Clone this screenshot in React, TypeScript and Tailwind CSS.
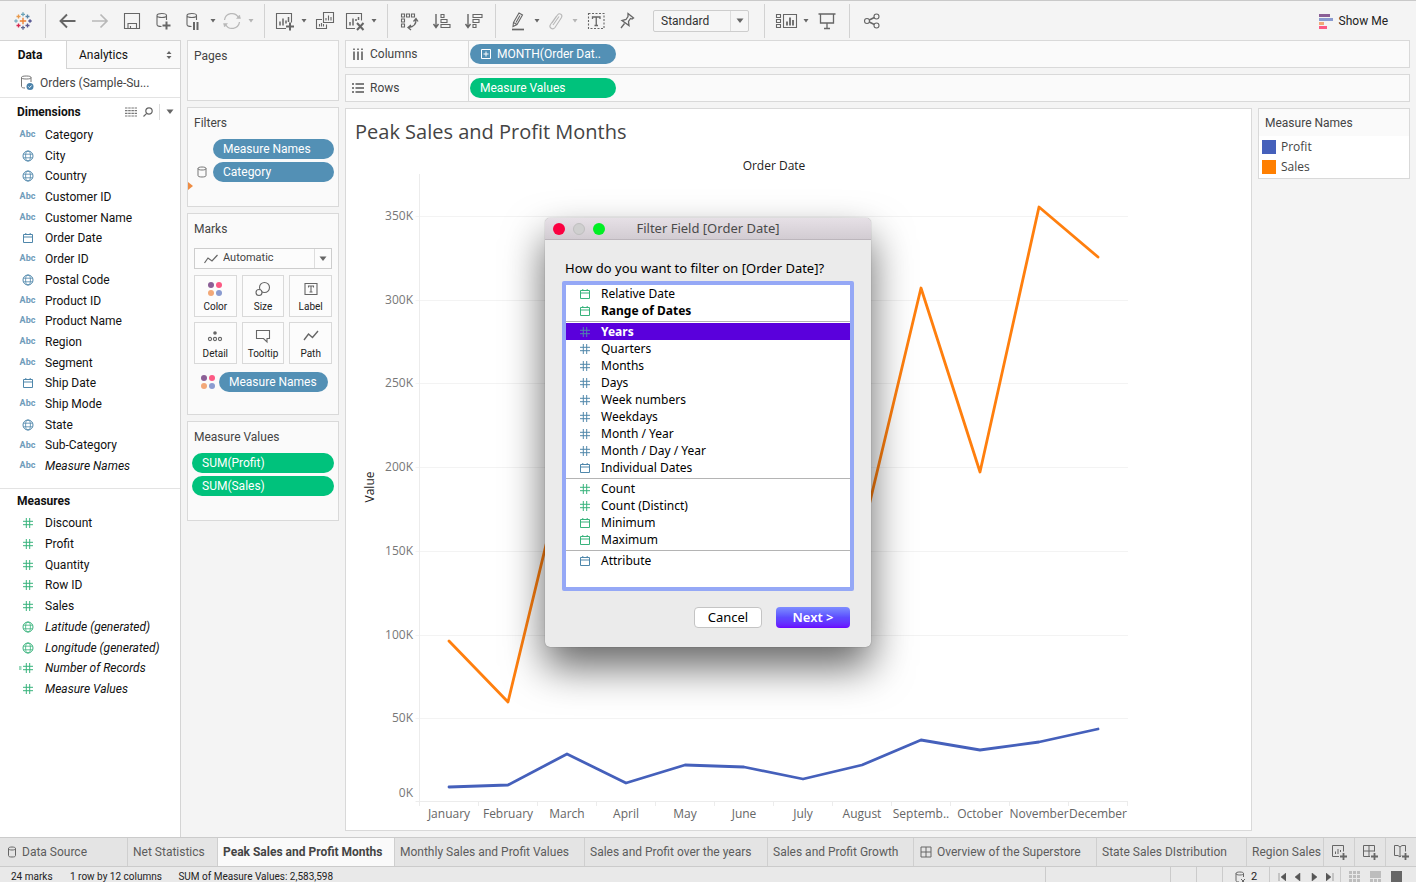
import type { ReactNode } from 'react';

type IconKind = 'abc' | 'globe' | 'date' | 'num' | 'calc';
type Tone = 'blue' | 'green';

const dimensions: [IconKind, string][] = [
  ['abc', 'Category'],
  ['globe', 'City'],
  ['globe', 'Country'],
  ['abc', 'Customer ID'],
  ['abc', 'Customer Name'],
  ['date', 'Order Date'],
  ['abc', 'Order ID'],
  ['globe', 'Postal Code'],
  ['abc', 'Product ID'],
  ['abc', 'Product Name'],
  ['abc', 'Region'],
  ['abc', 'Segment'],
  ['date', 'Ship Date'],
  ['abc', 'Ship Mode'],
  ['globe', 'State'],
  ['abc', 'Sub-Category'],
  ['abc', 'Measure Names'],
];

const measures: [IconKind, string][] = [
  ['num', 'Discount'],
  ['num', 'Profit'],
  ['num', 'Quantity'],
  ['num', 'Row ID'],
  ['num', 'Sales'],
  ['globe', 'Latitude (generated)'],
  ['globe', 'Longitude (generated)'],
  ['calc', 'Number of Records'],
  ['num', 'Measure Values'],
];

const generated = ['Measure Names', 'Latitude (generated)', 'Longitude (generated)', 'Number of Records', 'Measure Values'];

const filterOptions: [IconKind, Tone, string][][] = [
  [
    ['date', 'green', 'Relative Date'],
    ['date', 'green', 'Range of Dates'],
  ],
  [
    ['num', 'blue', 'Years'],
    ['num', 'blue', 'Quarters'],
    ['num', 'blue', 'Months'],
    ['num', 'blue', 'Days'],
    ['num', 'blue', 'Week numbers'],
    ['num', 'blue', 'Weekdays'],
    ['num', 'blue', 'Month / Year'],
    ['num', 'blue', 'Month / Day / Year'],
    ['date', 'blue', 'Individual Dates'],
  ],
  [
    ['num', 'green', 'Count'],
    ['num', 'green', 'Count (Distinct)'],
    ['date', 'green', 'Minimum'],
    ['date', 'green', 'Maximum'],
  ],
  [['date', 'blue', 'Attribute']],
];

const months = ['January', 'February', 'March', 'April', 'May', 'June', 'July', 'August', 'Septemb..', 'October', 'November', 'December'];
const salesY = [490, 551, 307, 318, 390, 398, 405, 384, 137, 321, 56, 106];
const profitY = [636, 634, 603, 632, 614, 616, 628, 614, 589, 599, 591, 578];
const axisLabels = ['350K', '300K', '250K', '200K', '150K', '100K', '50K', '0K'];

function FieldIcon({ kind, tone }: { kind: IconKind; tone: Tone }) {
  const color = tone === 'blue' ? 'text-[#4f87ab]' : 'text-[#38b37c]';
  if (kind === 'abc') {
    return <span className="text-[9px] font-bold text-[#6f9cba]">Abc</span>;
  }
  return (
    <svg className={`size-3 shrink-0 overflow-visible ${color}`} viewBox="0 0 12 12" fill="none" stroke="currentColor">
      {kind === 'globe' && (
        <>
          <circle cx="6" cy="6" r="5" />
          <ellipse cx="6" cy="6" rx="2.4" ry="5" strokeWidth=".8" />
          <path d="M1.5 4.2h9M1.5 7.8h9" strokeWidth=".8" />
        </>
      )}
      {kind === 'date' && <path d="M1.5 2.5h9v8h-9zM1.5 5h9M3.8 1v1.5M8.2 1v1.5" />}
      {(kind === 'num' || kind === 'calc') && <path d="M4.3 1v10M7.7 1v10M1 4.3h10M1 7.7h10" />}
      {kind === 'calc' && <path d="M-3 5h2.5M-3 7h2.5" />}
    </svg>
  );
}

function Field({ kind, name, tone }: { kind: IconKind; name: string; tone: Tone }) {
  return (
    <li className="flex h-5 items-center">
      <span className="flex w-[45px] justify-center pl-2.5">
        <FieldIcon kind={kind} tone={tone} />
      </span>
      <span className={generated.includes(name) ? 'italic' : ''}>{name}</span>
    </li>
  );
}

function Caret({ faded }: { faded?: boolean }) {
  return (
    <button aria-label="More" className={`flex w-2.5 justify-center ${faded ? 'text-[#b5b5b5]' : 'text-[#666]'}`}>
      <svg className="h-1 w-1.5" viewBox="0 0 6 4" fill="currentColor">
        <path d="M.5 0h5L3 3.5z" />
      </svg>
    </button>
  );
}

function DropArrow() {
  return (
    <svg className="h-1.5 w-2" viewBox="0 0 8 6" fill="#666">
      <path d="M.5.5h7L4 5z" />
    </svg>
  );
}

function Tool({ label, wide, faded, children }: { label: string; wide?: boolean; faded?: boolean; children: ReactNode }) {
  return (
    <button
      aria-label={label}
      className={`flex shrink-0 justify-center ${wide ? 'w-8' : 'w-7'} ${faded ? 'text-[#b8b8b8]' : 'text-[#666]'}`}
    >
      <svg className="size-5 overflow-visible" viewBox="0 0 20 20" fill="none" stroke="currentColor" strokeWidth="1.1">
        {children}
      </svg>
    </button>
  );
}

function Divider() {
  return <div className="h-[34px] w-px shrink-0 bg-[#d2d2d2]" />;
}

const cylinder = 'M3 4.5v9c0 1.2 1.8 2 4.5 2M12.5 4.5V9M3 4.5C3 3.2 5 2.5 7.8 2.5s4.7.7 4.7 2-2 2-4.7 2S3 5.8 3 4.5';

function Logo() {
  const crosses: [number, number, number, string][] = [
    [10, 10, 3.2, '#eb7d31'],
    [10, 3.3, 2, '#6ba3b8'],
    [10, 16.7, 2, '#5b6591'],
    [3, 10, 1.7, '#7bb0c4'],
    [17, 10, 1.7, '#4f4f8f'],
    [5.5, 5.5, 2, '#e89a4c'],
    [14.5, 5.5, 2, '#5a86a8'],
    [5.5, 14.5, 2, '#d8274f'],
    [14.5, 14.5, 2, '#5a5791'],
  ];
  return (
    <svg className="size-5" viewBox="0 0 20 20" fill="none">
      {crosses.map(([x, y, r, color]) => (
        <path key={`${x}-${y}`} d={`M${x - r} ${y}h${r * 2}M${x} ${y - r}v${r * 2}`} stroke={color} strokeWidth="1.3" />
      ))}
    </svg>
  );
}

function Toolbar() {
  return (
    <header className="flex h-10 shrink-0 items-center border-t border-[#c9c9c9]">
      <div className="flex w-[45px] justify-center">
        <Logo />
      </div>
      <Divider />
      <div className="flex items-center pr-2 pl-1.5">
        <Tool label="Undo" wide>
          <path d="M17.5 10H3M9 3.5L2.5 10 9 16.5" strokeWidth="1.9" />
        </Tool>
        <Tool label="Redo" wide faded>
          <path d="M2 10h14.5M10.5 3.5L17 10l-6.5 6.5" strokeWidth="1.7" />
        </Tool>
        <Tool label="Save" wide>
          <path d="M2.5 2.5h15v15h-15zM6 17.5v-5h8.5v5M8.500 17.5v-2.5" />
        </Tool>
        <Tool label="New data source" wide>
          <path d={cylinder} />
          <path d="M12.5 10.5v8M8.5 14.5h8" strokeWidth="2" />
        </Tool>
        <Tool label="Pause updates">
          <path d={cylinder} />
          <path d="M10 11v8M13.5 11v8" strokeWidth="2" />
        </Tool>
        <Caret />
        <Tool label="Refresh" faded>
          <path d="M2.5 9a7.5 7.5 0 0 1 14-2.5M17.5 11a7.5 7.5 0 0 1-14 2.5" strokeWidth="1.3" />
          <path d="M14.5 7.500h4l-1-3.5zM5.5 12.5h-4l1 3.5z" fill="currentColor" strokeWidth=".5" />
        </Tool>
        <Caret faded />
      </div>
      <Divider />
      <div className="flex items-center pr-2 pl-1.5">
        <Tool label="New worksheet">
          <path d="M11 17.5H1.500v-15h15v9" />
          <path d="M5 14.5v-4M8 14.5v-7M11 12.5v-3M13.5 11v-5" strokeWidth="1.5" />
          <path d="M15 11.5v8M11 15.5h8" strokeWidth="2" />
        </Tool>
        <Caret />
        <Tool label="Duplicate sheet" wide>
          <path d="M8.5 1.500h10v10h-10zM7 8.500H1.500v9h10v-4" />
          <path d="M11 9.500V7M13.5 9.500V4.500M16 9.500V6M4.500 15.500V13M6.500 15.500V12M8.500 15.500V13" />
        </Tool>
        <Tool label="Clear sheet">
          <path d="M10 17.5H1.500v-15h15v7" />
          <path d="M5 14.5V11M8 14.5v-7M11 10V8M13.5 9V6" strokeWidth="1.5" />
          <path d="M12 12l6.500 7M18.500 12L12 19" strokeWidth="2" />
        </Tool>
        <Caret />
      </div>
      <Divider />
      <div className="flex items-center pr-[5px] pl-1.5">
        <Tool label="Swap rows and columns" wide>
          <path d="M1.500 3h3v3h-3zM6.500 3h3v3h-3zM11.5 3h3v3h-3zM1.500 8h3v3h-3zM1.500 13h3v3h-3z" />
          <path d="M16 8c.3 5-2 8-7.500 8.500M13.5 10.500l2.500-3 2 3M11 14l-3 2.500 3 2.500" strokeWidth="1.3" />
        </Tool>
        <Tool label="Sort ascending" wide>
          <path d="M4 3v13M1.500 13L4 16.500 6.500 13" strokeWidth="1.400" />
          <path d="M9 3.500h3v3H9zM9 8.500h6v3H9zM9 13.500h9v3H9z" />
        </Tool>
        <Tool label="Sort descending" wide>
          <path d="M4 3v13M1.500 13L4 16.500 6.500 13" strokeWidth="1.400" />
          <path d="M9 3.500h9v3H9zM9 8.500h6v3H9zM9 13.500h3v3H9z" />
        </Tool>
      </div>
      <Divider />
      <div className="flex items-center pr-[15px] pl-2">
        <Tool label="Highlight">
          <path d="M5.500 11.500L11 2l3.500 2L9 13.500l-4 2zM5.500 11.500l3.500 2M12 4.500l-4 7" />
          <path d="M4 18.500h12" strokeWidth="1.700" />
        </Tool>
        <Caret />
        <Tool label="Group members" faded>
          <path d="M6 12l5.500-8c2-2.500 5.500-.5 4 2.500L9 16.500c-2.500 3-6.500 0-4.500-3l6-8.500M7 14l6-8.500" />
        </Tool>
        <Caret faded />
        <Tool label="Show mark labels" wide>
          <path d="M2.500 2.500H18v15H2.500z" strokeDasharray="2 1.500" />
          <path d="M6.500 8V6H14v2M10.250 6v8.500M8.500 14.500H12" strokeWidth="1.300" />
        </Tool>
        <Tool label="Fix axes">
          <path d="M12 2.500l5.500 4.500-1.500 1-1.500-.5-2 3 .5 4-7-5 4-1 2-3zM8.500 12.500L5 17" strokeWidth="1.300" />
        </Tool>
        <div className="relative ml-[13px] h-[22px] w-24">
          <select
            aria-label="Fit"
            className="block h-full w-full appearance-none rounded-xs border border-[#cdcdcd] bg-[#f6f6f6] pl-[7px] text-[12px] text-[#333]"
          >
            <option>Standard</option>
          </select>
          <span className="pointer-events-none absolute inset-y-px right-px flex w-[18px] items-center justify-center border-l border-[#ddd]">
            <DropArrow />
          </span>
        </div>
      </div>
      <Divider />
      <div className="flex items-center pr-1.5 pl-2">
        <Tool label="Show cards">
          <path d="M6.500 3.500h13v13h-13zM-.5 3.500h4v3h-4zM-.5 8.500h4v3h-4zM-.5 13.500h4v3h-4z" />
          <path d="M10 14.500v-4M13 14.500v-8M16 14.500V9" strokeWidth="1.800" />
        </Tool>
        <Caret />
        <Tool label="Presentation mode" wide>
          <path d="M1.500 3h17M3.500 3v9h13V3M10 12v5M7 17.500h6" strokeWidth="1.300" />
        </Tool>
      </div>
      <Divider />
      <div className="flex grow items-center pl-2">
        <Tool label="Share">
          <circle cx="5" cy="10" r="2.500" />
          <circle cx="14.500" cy="5.500" r="2.500" />
          <circle cx="14.500" cy="14.500" r="2.500" />
          <path d="M7.300 9l5-2.500M7.300 11l5 2.500" strokeWidth="1.400" />
        </Tool>
      </div>
      <button className="mr-7 flex items-center gap-1.5 text-[12px] text-[#222]">
        <svg className="h-4 w-3.5" viewBox="0 0 14 16">
          <path fill="#8b5f96" d="M0 1h11v3H0z" />
          <path fill="#8a9bd0" d="M0 5h14v3H0z" />
          <path fill="#f2a878" d="M0 9h5v3H0z" />
          <path fill="#fc5a84" d="M0 13h8v3H0z" />
        </svg>
        Show Me
      </button>
    </header>
  );
}

function Sidebar() {
  return (
    <aside className="flex w-[181px] shrink-0 flex-col border-t border-r border-[#d4d4d4] bg-white text-[12px] text-[#111]">
      <div className="flex h-7 shrink-0">
        <button className="w-[66px] pr-1.5 font-bold">Data</button>
        <button className="flex grow items-center justify-between border-b border-l border-[#d4d4d4] bg-[#f9f9f9] pr-2 pl-3">
          Analytics
          <svg className="h-2 w-1.5" viewBox="0 0 6 8" fill="#666">
            <path d="M3 0l2.500 3h-5zM3 8L.5 5h5z" />
          </svg>
        </button>
      </div>
      <div className="flex h-[29px] shrink-0 items-center border-b border-[#e3e3e3] pl-5 text-[#444]">
        <svg className="mr-1.5 size-3.5 overflow-visible" viewBox="0 0 14 14" fill="none" stroke="#777">
          <path d="M1.500 1.500v9c0 1 1.500 1.500 3.500 1.500M11 1.500V6M1.500 1.500C1.500.5 3 0 6.200 0S11 .5 11 1.500 9.500 3 6.200 3 1.500 2.500 1.500 1.500" />
          <circle cx="10" cy="10.500" r="3.500" fill="#4a82aa" stroke="none" />
          <path d="M8.400 10.500l1.200 1.200 2-2.200" stroke="#fff" />
        </svg>
        Orders (Sample-Su...
      </div>
      <div className="flex h-[27px] shrink-0 items-center pr-1.5 pl-[17px]">
        <h2 className="grow font-bold">Dimensions</h2>
        <button aria-label="View as list" className="mr-1.5">
          <svg className="h-2.5 w-3" viewBox="0 0 12 10" stroke="#777" strokeWidth="1.200">
            <path d="M0 1h12M0 3.600h12M0 6.300h12M0 9h12" strokeDasharray="2.500 .7" />
          </svg>
        </button>
        <button aria-label="Find field" className="mr-1.5">
          <svg className="size-2.5" viewBox="0 0 10 10" fill="none" stroke="#666" strokeWidth="1.200">
            <circle cx="6" cy="4" r="3.200" />
            <path d="M3.700 6.300L.5 9.500" />
          </svg>
        </button>
        <div className="mr-1.5 h-4 w-px bg-[#ddd]" />
        <button aria-label="Dimensions menu">
          <DropArrow />
        </button>
      </div>
      <ul className="flex h-[351px] shrink-0 flex-col justify-between">
        {dimensions.map(([kind, name]) => (
          <Field key={name} kind={kind} name={name} tone="blue" />
        ))}
      </ul>
      <h2 className="mt-3 flex h-[25px] shrink-0 items-center border-t border-[#e3e3e3] pl-[17px] font-bold">Measures</h2>
      <ul className="flex h-[186px] shrink-0 flex-col justify-between">
        {measures.map(([kind, name]) => (
          <Field key={name} kind={kind} name={name} tone="green" />
        ))}
      </ul>
    </aside>
  );
}

function Pill({ tone, className, children }: { tone: Tone; className?: string; children: ReactNode }) {
  return (
    <button
      className={`flex h-5 items-center rounded-full px-2.5 text-[12px] text-white ${tone === 'blue' ? 'bg-[#5390b5]' : 'bg-[#00c27c]'} ${className ?? ''}`}
    >
      {children}
    </button>
  );
}

function Card({ title, className, children }: { title: string; className: string; children?: ReactNode }) {
  return (
    <section className={`relative shrink-0 border border-[#d9d9d9] bg-[#fafafa] ${className}`}>
      <h3 className="flex h-[30px] items-center pl-1.5 text-[12px] text-[#444]">{title}</h3>
      {children}
    </section>
  );
}

function ColorDots() {
  return (
    <svg className="size-4" viewBox="0 0 16 16">
      <circle cx="4" cy="4" r="3" fill="#8b5f96" />
      <circle cx="12" cy="4" r="3" fill="#fc5a84" />
      <circle cx="4" cy="12" r="3" fill="#f2a878" />
      <circle cx="12" cy="12" r="3" fill="#8a9bd0" />
    </svg>
  );
}

function MarkButton({ label, children }: { label: string; children: ReactNode }) {
  return (
    <button className="flex h-[42px] flex-col items-center justify-between border border-[#d9d9d9] bg-[#fcfcfc] pt-[5px] pb-0.5 text-[10px] text-[#222]">
      {children}
      {label}
    </button>
  );
}

function MarkIcon({ children }: { children: ReactNode }) {
  return (
    <svg className="size-4" viewBox="0 0 16 16" fill="none" stroke="#666" strokeWidth="1.100">
      {children}
    </svg>
  );
}

function Cards() {
  return (
    <div className="flex w-[152px] shrink-0 flex-col gap-1.5">
      <Card title="Pages" className="h-[61px]" />
      <Card title="Filters" className="h-[100px]">
        <div className="flex flex-col items-end gap-[3px] pt-px pr-1">
          <Pill tone="blue" className="w-[121px]">Measure Names</Pill>
          <div className="flex items-center gap-1.5">
            <svg className="h-3 w-2.5" viewBox="0 0 10 12" fill="none" stroke="#777">
              <path d="M1 2.500v7c0 1 1.500 1.500 4 1.500s4-.5 4-1.500v-7M1 2.500C1 1.500 2.500 1 5 1s4 .5 4 1.500S7.500 4 5 4 1 3.500 1 2.500" />
            </svg>
            <Pill tone="blue" className="w-[121px]">Category</Pill>
          </div>
        </div>
        <svg className="absolute bottom-4 left-0 h-2 w-[5px]" viewBox="0 0 5 8" fill="#ee8c43">
          <path d="M0 0l5 4-5 4z" />
        </svg>
      </Card>
      <Card title="Marks" className="h-[202px]">
        <div className="relative mx-1.5 mt-1 h-[21px]">
          <select
            aria-label="Mark type"
            className="block h-full w-full appearance-none border border-[#cdcdcd] bg-[#fcfcfc] pl-7 text-[11px] text-[#444]"
          >
            <option>Automatic</option>
          </select>
          <svg className="pointer-events-none absolute top-1.5 left-2.5 h-2.5 w-3.5" viewBox="0 0 14 10" fill="none" stroke="#666" strokeWidth="1.200">
            <path d="M.5 9L4 4l4 3 5.500-6" />
          </svg>
          <span className="pointer-events-none absolute inset-y-px right-px flex w-[17px] items-center justify-center border-l border-[#ddd]">
            <DropArrow />
          </span>
        </div>
        <div className="mx-1.5 mt-1.5 grid grid-cols-3 gap-[5px]">
          <MarkButton label="Color">
            <ColorDots />
          </MarkButton>
          <MarkButton label="Size">
            <MarkIcon>
              <circle cx="9.500" cy="6.500" r="5" />
              <circle cx="4" cy="11.500" r="3" fill="#fcfcfc" />
            </MarkIcon>
          </MarkButton>
          <MarkButton label="Label">
            <MarkIcon>
              <path d="M2 2.500h12v11H2z" />
              <path d="M5.500 6.500V5h5v1.500M8 5v6M6.500 11h3" />
            </MarkIcon>
          </MarkButton>
          <MarkButton label="Detail">
            <MarkIcon>
              <circle cx="8" cy="5" r="1.800" fill="#666" stroke="none" />
              <circle cx="3" cy="11" r="1.600" />
              <circle cx="8" cy="11" r="1.600" />
              <circle cx="13" cy="11" r="1.600" />
            </MarkIcon>
          </MarkButton>
          <MarkButton label="Tooltip">
            <MarkIcon>
              <path d="M1.500 2.500h13v8H12V14l-3.500-3.500h-7z" />
            </MarkIcon>
          </MarkButton>
          <MarkButton label="Path">
            <MarkIcon>
              <path d="M1 12l4.500-6 4 3.500L15 3" strokeWidth="1.400" />
            </MarkIcon>
          </MarkButton>
        </div>
        <div className="mt-2 flex items-center gap-[3px] pl-3">
          <ColorDots />
          <Pill tone="blue" className="w-[109px]">Measure Names</Pill>
        </div>
      </Card>
      <Card title="Measure Values" className="h-[100px]">
        <div className="flex flex-col gap-[3px] px-1 pt-px">
          <Pill tone="green">SUM(Profit)</Pill>
          <Pill tone="green">SUM(Sales)</Pill>
        </div>
      </Card>
    </div>
  );
}

function Shelf({ label, icon, children }: { label: string; icon: ReactNode; children: ReactNode }) {
  return (
    <div className="flex h-7 shrink-0 items-center border border-[#d9d9d9] bg-[#fafafa] text-[12px] text-[#444]">
      <div className="flex h-full w-[123px] items-center gap-1.5 border-r border-[#d9d9d9] pl-1.5">
        <svg className="size-3" viewBox="0 0 12 12" stroke="#555" strokeWidth="1.500">
          {icon}
        </svg>
        {label}
      </div>
      <div className="pl-px">{children}</div>
    </div>
  );
}

const MONTH_STEP = 59;
const FIRST_MONTH = 103;
const AXIS_X = 73.5;

function linePoints(values: number[]) {
  return values.map((y, i) => `${FIRST_MONTH + i * MONTH_STEP},${y}`).join(' ');
}

function Chart() {
  return (
    <svg
      className="min-h-0 w-full grow"
      viewBox="0 0 905 678"
      preserveAspectRatio="xMinYMin meet"
      fontFamily="'Open Sans', 'Noto Sans', sans-serif"
      fontSize="12"
    >
      <text x="428" y="19" textAnchor="middle" fill="#222">
        Order Date
      </text>
      {axisLabels.map((label, i) => {
        const y = i === 7 ? 642 : 65 + Math.round(i * 83.7);
        return (
          <g key={label}>
            {i < 7 && <path d={`M${AXIS_X - 4} ${y + 0.5}H782`} stroke="#f3f3f3" />}
            <text x="67" y={y + 4} textAnchor="end" fill="#777">
              {label}
            </text>
          </g>
        );
      })}
      <path d={`M${AXIS_X} 23v632M${AXIS_X - 4} 650.5H782`} stroke="#ececec" fill="none" />
      {months.map((month, i) => (
        <path key={month} d={`M${AXIS_X + (i + 1) * MONTH_STEP} 650v5`} stroke="#ececec" />
      ))}
      <text transform="translate(28 336) rotate(-90)" textAnchor="middle" fill="#222">
        Value
      </text>
      <polyline points={linePoints(salesY)} fill="none" stroke="#ff7f0e" strokeWidth="2.800" strokeLinejoin="round" strokeLinecap="round" />
      <polyline points={linePoints(profitY)} fill="none" stroke="#4560bb" strokeWidth="2.800" strokeLinejoin="round" strokeLinecap="round" />
      {months.map((month, i) => (
        <text key={month} x={FIRST_MONTH + i * MONTH_STEP} y="667" textAnchor="middle" fill="#666">
          {month}
        </text>
      ))}
    </svg>
  );
}

function Workspace() {
  return (
    <main className="flex min-w-0 grow flex-col gap-1.5">
      <Shelf label="Columns" icon={<path d="M2 .5v1.500M6 .5v1.500M10 .5v1.500M2 3.500V12M6 3.500V12M10 3.500V12" />}>
        <Pill tone="blue" className="w-[146px]">
          <svg className="mr-1.5 ml-px size-2.5 shrink-0" viewBox="0 0 10 10" fill="none" stroke="#fff">
            <path d="M.5.5h9v9h-9zM5 2.500v5M2.500 5h5" />
          </svg>
          MONTH(Order Dat..
        </Pill>
      </Shelf>
      <Shelf label="Rows" icon={<path d="M0 2h2M3.500 2H12M0 6h2M3.500 6H12M0 10h2M3.500 10H12" />}>
        <Pill tone="green" className="w-[146px]">Measure Values</Pill>
      </Shelf>
      <div className="flex min-h-0 grow items-start gap-1.5">
        <section className="flex h-full min-w-0 grow flex-col border border-[#d9d9d9] bg-white">
          <h1 className="flex h-[42px] shrink-0 items-end pb-1 pl-[9px] font-['Open_Sans','Noto_Sans',sans-serif] text-[20px] text-[#444]">
            Peak Sales and Profit Months
          </h1>
          <Chart />
        </section>
        <section className="w-[152px] shrink-0 border border-[#d9d9d9] bg-white">
          <h3 className="flex h-[27px] items-center bg-[#fafafa] pl-1.5 text-[12px] text-[#444]">Measure Names</h3>
          <ul className="py-px pl-[3px] font-['Open_Sans','Noto_Sans',sans-serif] text-[12px] text-[#444]">
            <li className="flex h-5 items-center gap-[5px]">
              <span className="size-3.5 bg-[#4560bb]" />
              Profit
            </li>
            <li className="flex h-5 items-center gap-[5px]">
              <span className="size-3.5 bg-[#ff7f00]" />
              Sales
            </li>
          </ul>
        </section>
      </div>
    </main>
  );
}

function FilterDialog() {
  return (
    <div
      role="dialog"
      aria-labelledby="filter-title"
      className="absolute top-[218px] left-1/2 w-[326px] -translate-x-1/2 rounded-[5px] bg-[#ebebeb] font-['Noto_Sans','Open_Sans',sans-serif] text-[13px] text-black shadow-[0_0_1px_rgba(0,0,0,0.5),0_20px_40px_rgba(0,0,0,0.6)]"
    >
      <div className="relative flex h-[22px] items-center justify-center rounded-t-[5px] border-b border-[#bcb6bc] bg-linear-to-b from-[#e6e0e6] to-[#d2ccd2]">
        <div className="absolute left-2 flex gap-2">
          <button aria-label="Close" className="size-3 rounded-full bg-[#fb0041]" />
          <button aria-label="Minimize" className="size-3 rounded-full border border-[#bfbfbf] bg-[#cfcfcf]" />
          <button aria-label="Zoom" className="size-3 rounded-full bg-[#00ef24]" />
        </div>
        <h2 id="filter-title" className="text-[#4a4a4a]">Filter Field [Order Date]</h2>
      </div>
      <div className="px-[17px] pt-[18px] pb-[19px]">
        <p className="h-[23px] pl-[3px] leading-5">How do you want to filter on [Order Date]?</p>
        <div role="listbox" aria-label="Filter type" className="h-[310px] rounded-xs border-4 border-[#95a8f6] bg-white text-[12px]">
          {filterOptions.map((group, g) => (
            <div key={group[0][2]} role="group">
              {g > 0 && <div className="mt-[2px] mb-px h-px bg-[#b4b4b4]" />}
              {group.map(([kind, tone, name]) => {
                const selected = name === 'Years';
                const bold = selected || name === 'Range of Dates';
                return (
                  <div
                    key={name}
                    role="option"
                    aria-selected={selected}
                    className={`flex h-[17px] items-center gap-2.5 pl-[13px] ${selected ? 'bg-[#5a00dc] text-white' : ''} ${bold ? 'font-bold' : ''}`}
                  >
                    <FieldIcon kind={kind} tone={tone} />
                    {name}
                  </div>
                );
              })}
            </div>
          ))}
        </div>
        <div className="mt-4 flex justify-end gap-[14px] pr-1">
          <button className="flex h-[21px] w-[68px] items-center justify-center rounded-[4px] border border-[#c4c4c4] bg-white">Cancel</button>
          <button className="flex h-[21px] w-[74px] items-center justify-center rounded-[4px] bg-linear-to-b from-[#7f8dff] via-[#5d4bff] to-[#6a00ff] font-semibold text-white">
            Next &gt;
          </button>
        </div>
      </div>
    </div>
  );
}

function SheetTab({ width, active, children }: { width: string; active?: boolean; children: ReactNode }) {
  return (
    <button
      className={`flex h-full items-center border-r border-[#cfcfcf] pl-[5px] whitespace-nowrap ${width} ${active ? 'bg-[#fafafa] font-bold text-[#444]' : ''}`}
    >
      {children}
    </button>
  );
}

function NewTab({ label, d }: { label: string; d: string }) {
  return (
    <button aria-label={label} className="flex h-full w-[31px] shrink-0 items-center justify-center border-l border-[#cfcfcf]">
      <svg className="size-4" viewBox="0 0 16 16" fill="none" stroke="#666">
        <path d={d} />
        <path d="M12.500 9v7M9 12.500h7" strokeWidth="1.800" />
      </svg>
    </button>
  );
}

function SheetTabs() {
  return (
    <nav className="flex h-[30px] shrink-0 items-center border-y border-[#cbcbcb] bg-[#e4e4e4] text-[12px] text-[#5c5c5c]">
      <div className="flex h-full min-w-0 grow">
        <SheetTab width="w-[128px] shrink-0">
          <svg className="mr-1.5 ml-[3px] h-3 w-2" viewBox="0 0 8 12" fill="none" stroke="#666">
            <path d="M.5 2.500v7c0 1 1 1.500 3.500 1.500s3.500-.5 3.500-1.500v-7C7.500 1.500 6 1 4 1S.5 1.500.5 2.500 2 4 4 4s3.500-.5 3.500-1.500" />
          </svg>
          Data Source
        </SheetTab>
        <SheetTab width="w-[90px] shrink-0">Net Statistics</SheetTab>
        <SheetTab width="w-[177px] shrink-0" active>Peak Sales and Profit Months</SheetTab>
        <SheetTab width="w-[190px] shrink-0">Monthly Sales and Profit Values</SheetTab>
        <SheetTab width="w-[183px] shrink-0">Sales and Profit over the years</SheetTab>
        <SheetTab width="w-[146px] shrink-0">Sales and Profit Growth</SheetTab>
        <SheetTab width="w-[183px] shrink-0">
          <svg className="mr-[5px] ml-px size-3" viewBox="0 0 12 12" fill="none" stroke="#666">
            <path d="M1 1h10v10H1zM6 1v10M1 6h10" />
          </svg>
          Overview of the Superstore
        </SheetTab>
        <SheetTab width="w-[150px] shrink-0">State Sales DIstribution</SheetTab>
        <button className="flex h-full min-w-0 grow items-center pl-[5px] whitespace-nowrap">Region Sales</button>
      </div>
      <NewTab label="New worksheet" d="M8 12.500H1.500v-11h11v6M4.500 10V7.500M7 10V5M9.500 8V6" />
      <NewTab label="New dashboard" d="M8 12.500H1.500v-11h11v6M7 1.500v11M1.500 7h11" />
      <NewTab label="New story" d="M8 11.500L7 13l-2-1.500H1.500v-10H5l2 1.500 2-1.500h3.500v6M7 3v10" />
    </nav>
  );
}

function StatusBar() {
  return (
    <footer className="flex h-[15px] shrink-0 overflow-hidden bg-[#e9e9e9] text-[10px] leading-5 text-[#222]">
      <p className="w-[59px] pl-[11px]">24 marks</p>
      <p className="grow pl-[11px]">
        1 row by 12 columns <span className="ml-3.5">SUM of Measure Values: 2,583,598</span>
      </p>
      <div className="w-[125px] border-l border-[#cbcbcb]" />
      <div className="w-[26px] border-l border-[#cbcbcb]" />
      <div className="w-[26px] border-l border-[#cbcbcb]" />
      <div className="flex w-[47px] gap-1.5 border-l border-[#cbcbcb] pl-3 text-[11px]">
        <svg className="mt-1 h-3 w-2.5" viewBox="0 0 10 12" fill="none" stroke="#666">
          <path d="M1 2.500v7c0 1 1 1.500 3 1.500M8.500 2.500V6M1 2.500C1 1.500 2.500 1 4.800 1s3.700.5 3.700 1.500S7 4 4.800 4 1 3.500 1 2.500M6 8l4 4M10 8l-4 4" />
        </svg>
        2
      </div>
      <div className="flex w-[71px] items-start gap-2 border-l border-[#cbcbcb] pt-1.5 pl-2 text-[#555]">
        {['M1 0v8M8 0L3 4l5 4z', 'M6 0L1 4l5 4z', 'M2 0l5 4-5 4z', 'M0 0l5 4-5 4zM7 0v8'].map((d) => (
          <button key={d} aria-label="Go to mark">
            <svg className="size-2" viewBox="0 0 8 8" fill="currentColor" stroke="currentColor" strokeWidth=".5">
              <path d={d} />
            </svg>
          </button>
        ))}
      </div>
      <div className="flex w-[76px] items-start gap-2.5 border-l border-[#cbcbcb] pt-1 pl-2">
        <svg className="h-3 w-[11px]" viewBox="0 0 11 12" fill="#bdbdbd">
          <path d="M0 0h3v3H0zM4 0h3v3H4zM8 0h3v3H8zM0 4h3v3H0zM4 4h3v3H4zM8 4h3v3H8zM0 8h3v3H0zM4 8h3v3H4zM8 8h3v3H8z" />
        </svg>
        <svg className="h-3 w-[11px]" viewBox="0 0 11 12" fill="#bdbdbd">
          <path d="M0 0h11v7H0zM0 8h3v3H0zM4 8h3v3H4zM8 8h3v3H8z" />
        </svg>
        <svg className="h-3 w-[11px]" viewBox="0 0 11 12" fill="#666">
          <path d="M0 0h11v11H0z" />
        </svg>
      </div>
    </footer>
  );
}

export default function App() {
  return (
    <div className="relative flex h-screen flex-col overflow-hidden bg-[#f4f4f4] font-[Roboto,'Liberation_Sans',sans-serif]">
      <Toolbar />
      <div className="flex min-h-0 grow">
        <Sidebar />
        <div className="flex min-w-0 grow gap-1.5 px-1.5 pb-1.5">
          <Cards />
          <Workspace />
        </div>
      </div>
      <SheetTabs />
      <StatusBar />
      <FilterDialog />
    </div>
  );
}
